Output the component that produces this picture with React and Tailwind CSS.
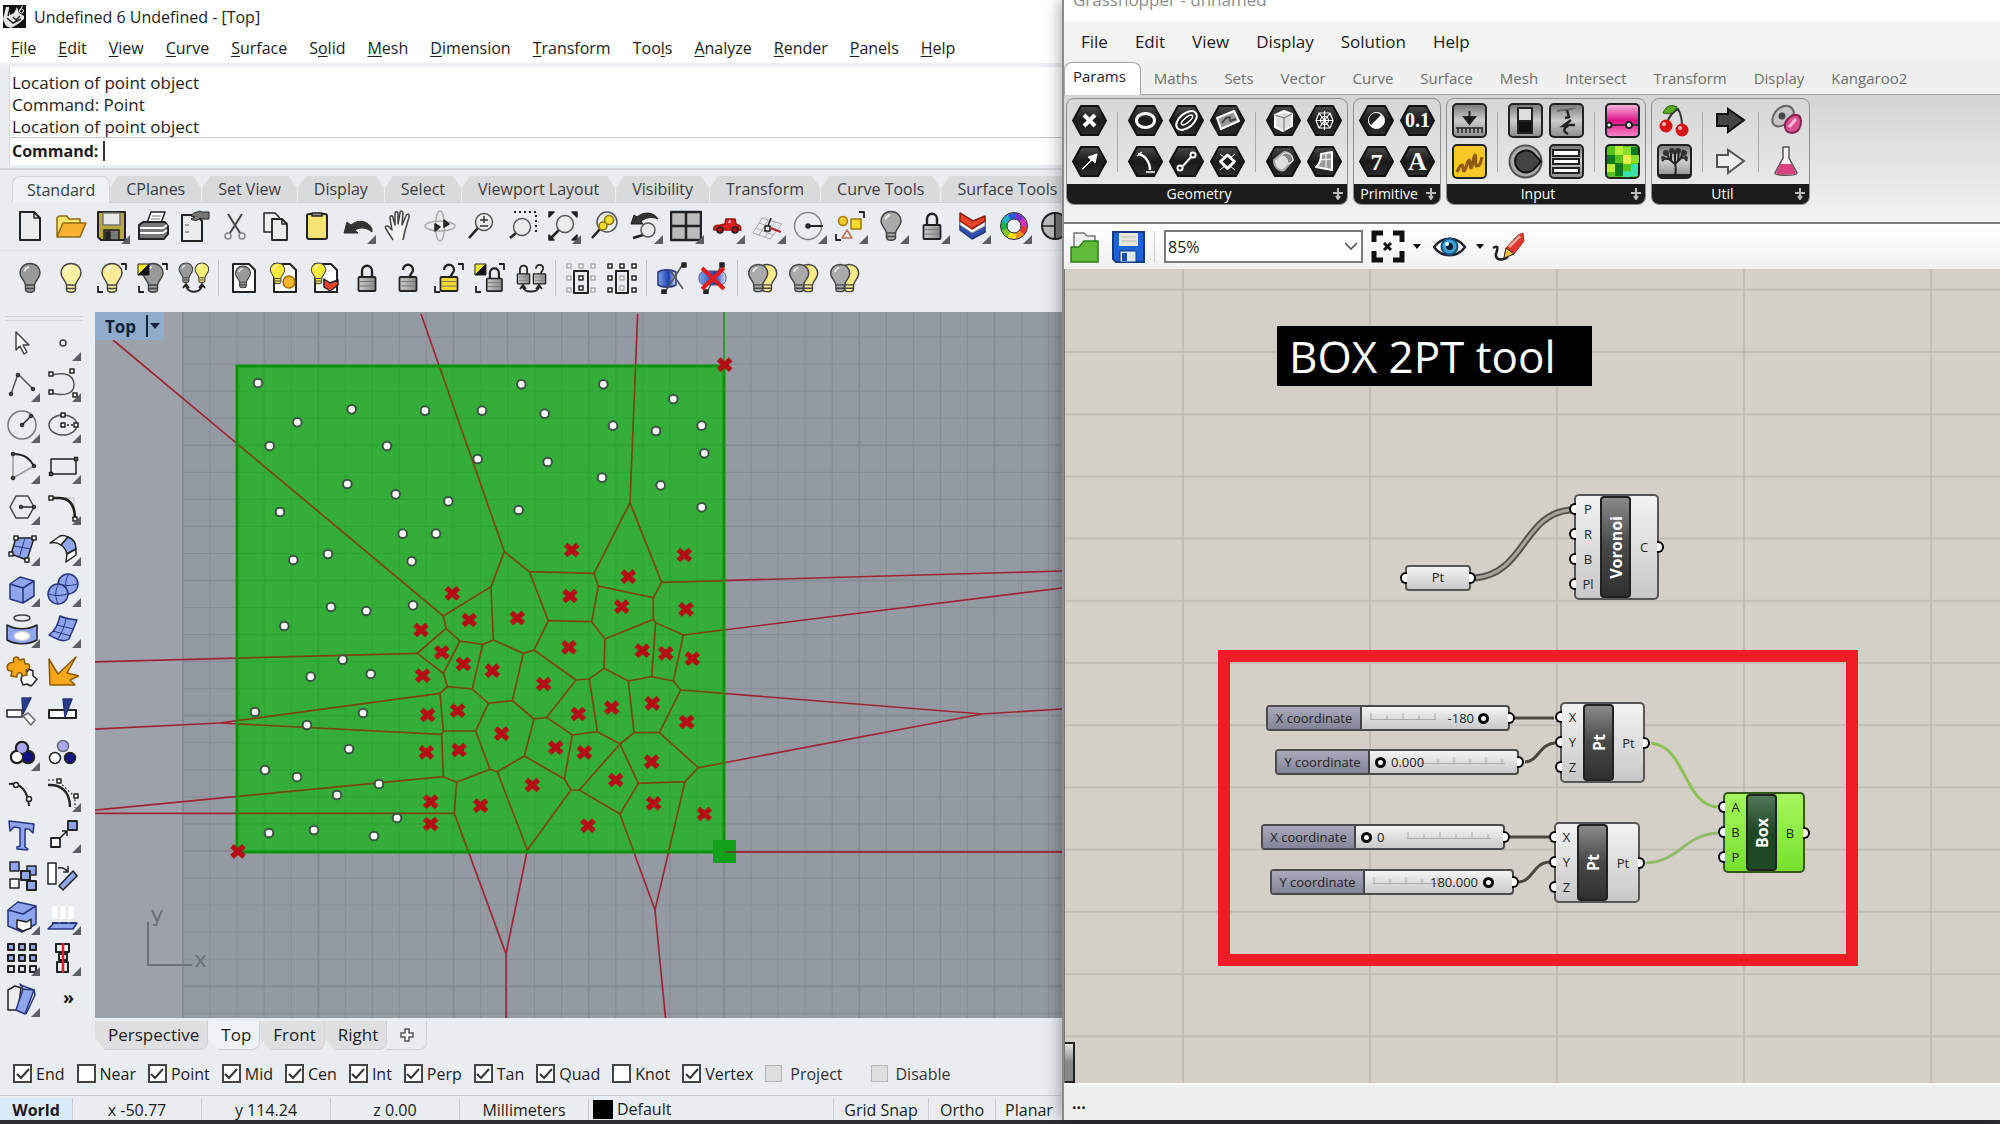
import React from "react";

const INK = "#222";
const BLUE = "#8fa6ee";
const NAVY = "#27357f";
const PALE = "#f4f5f7";

function Svg({ children, size = 32 }) {
  return (
    <svg width={size} height={size} viewBox="0 0 32 32" fill="none" stroke={INK} strokeWidth="1.5" strokeLinejoin="round" aria-hidden="true">
      {children}
    </svg>
  );
}

/* ---------- shared icon parts ---------- */
const Sq = ({ x, y, s = 4, f = "#fff" }) => <rect x={x - s / 2} y={y - s / 2} width={s} height={s} fill={f} strokeWidth="1.5" />;
const Dot = ({ x, y, r = 1.8 }) => <circle cx={x} cy={y} r={r} fill="#444" strokeWidth="1" />;

const BulbShape = ({ fill }) => (
  <g>
    <path d="M16 1.5c-6 0-10 4.300-10 9.500 0 5 4.500 7 5.500 12v4.500c0 3.500 9 3.500 9 0V23c1-5 5.500-7 5.500-12 0-5.200-4-9.500-10-9.500z" fill={fill} stroke="#444" />
    <path d="M12 23h8M12 26.500h8" stroke="#444" />
    <path d="M10.500 9.500c.5-2.500 2-4 4.500-4.500" stroke="#fff" strokeWidth="1.800" opacity=".8" />
  </g>
);
const LockShape = ({ fill = "url(#metal)", open = false }) => (
  <g>
    <path d={open ? "M11 8c0-7 10-7 10 0 0 3-3 3-3 7" : "M11 16V9c0-7 10-7 10 0v7"} strokeWidth="2.400" />
    <rect x="7.500" y="15" width="17" height="14" rx="1" fill={fill} strokeWidth="1.800" />
    <path d="M9 19.500h14M9 24h14" stroke="#777" strokeWidth="1" />
  </g>
);
const Corners = () => <path d="M25 2h5v6M2 24v6h5" strokeWidth="1.800" />;
const YellowTag = () => (
  <g strokeWidth="1">
    <path d="M1 2h11L1 13z" fill="#f5ec2c" />
    <path d="M12 2v11H1z" fill="#111" />
  </g>
);
const Lens = ({ cx = 19, cy = 12, r = 8.500 }) => (
  <g>
    <path d={`M${cx - r * 0.7} ${cy + r * 0.7}L4 28`} strokeWidth="2.600" />
    <circle cx={cx} cy={cy} r={r} fill="#e9ebee" stroke="#555" />
  </g>
);
const Page = () => <path d="M5 2h16l6 6v22H5z" fill="#fff" strokeWidth="2" />;

/* ---------- main toolbar icons ---------- */
const row1 = [
  ["New", false, <><path d="M6 2h14l6 6v22H6z" fill="#ececee" strokeWidth="2" /><path d="M20 2v6h6" /></>],
  ["Open", false, <><path d="M2 26V8l2-2h8l2 3h11v4" fill="#ffe56b" stroke="#8a6a10" /><path d="M2 27l6-14h23l-6 14z" fill="#f9b233" stroke="#8a6a10" /></>],
  ["Save", true, <><path d="M2 2h27v28H5l-3-3z" fill="#b8a73a" strokeWidth="2" /><rect x="7" y="3" width="17" height="12" fill="#e7e7e7" stroke="#777" /><rect x="8" y="20" width="15" height="10" fill="#777" /><rect x="10" y="22" width="4" height="7" fill="#222" /></>],
  ["Print", false, <><path d="M10 13l4-11h14l-4 11z" fill="#fff" /><path d="M15 6h9M14 9h9" stroke="#777" strokeWidth="1" /><path d="M2 15l4-3h22l3 4v8l-4 5H2z" fill="#777" strokeWidth="2" /><path d="M3 18h23l4-3M3 23h23l4-3" stroke="#fff" strokeWidth="1.800" /></>],
  ["Document properties", false, <><path d="M4 5h14l6 6v20H4z" fill="#ececee" strokeWidth="2" /><path d="M13 6c2-3 4-4 7-4l2-1 2 1h7v7h-7l-2-1c-2 3-6 3-9 1l4-2z" fill="#777" strokeWidth="1" /><path d="M7 15h4M7 22h4" stroke="#888" /></>],
  ["Cut", false, <><path d="M9 4l12 19M23 4L11 23" stroke="#444" strokeWidth="2" /><circle cx="9" cy="26" r="3" stroke="#888" /><circle cx="23" cy="26" r="3" stroke="#888" /></>],
  ["Copy", false, <><path d="M4 3h11l4 4v15H4z" fill="#eee" /><path d="M12 9h10l5 5v16H12z" fill="#ececee" strokeWidth="1.800" /><path d="M22 9v5h5" /></>],
  ["Paste", false, <><rect x="6" y="4" width="20" height="25" rx="2" fill="#f7e275" strokeWidth="2" /><path d="M11 6V3h10v3z" fill="#999" /></>],
  ["Undo", true, <path d="M2 23l3-11 4 3c7-6 17-5 21 4v3c-6-5-12-5-17-2l3 3z" fill="#333" stroke="#333" strokeWidth="1" />],
  ["Pan", false, <path d="M10 30L3 19c-2-3 1-4 3-2l3 3L7 8c0-3 3-3 3 0l2 7V4c0-3 3-3 3 0v10l2-11c0-3 3-2 3 0l-1 12 4-9c1-3 4-2 3 1l-4 14-2 9" fill="#f3f3f3" stroke="#444" />],
  ["Rotate view", false, <><ellipse cx="16" cy="16" rx="15" ry="5" stroke="#aaa" /><ellipse cx="16" cy="16" rx="4.500" ry="15" stroke="#aaa" /><path d="M11 14l5 3-5 4zM20 10l5 4-5 3z" fill="#333" /></>],
  ["Zoom dynamic", false, <><Lens /><path d="M15 10h8M19 6v7M15 16h8" stroke="#333" /></>],
  ["Zoom window", false, <><Lens cx={16} cy={17} /><path d="M8 2h22v21" strokeDasharray="2 3" strokeWidth="2" /></>],
  ["Zoom extents", true, <><Lens cx={18} cy={14} /><path d="M2 7V2h5zM30 7V2h-5zM30 25v5h-5zM2 25v5h5z" fill="#222" /></>],
  ["Zoom selected", false, <><Lens cx={19} cy={12} r={10} /><circle cx="21" cy="10" r="4.500" fill="#f4dc2f" stroke="#887500" /><circle cx="15" cy="16" r="4" fill="#f4dc2f" stroke="#887500" /></>],
  ["Undo view change", true, <><Lens cx={19} cy={20} r={7} /><path d="M2 14l3-9 3 2c7-6 17-5 21 2-7-3-12-1-17 2l2 3z" fill="#333" strokeWidth="1" /></>],
  ["Four viewports", true, <><rect x="1" y="2" width="30" height="28" fill="#bbb" strokeWidth="2.500" /><path d="M16 2v28M1 16h30" strokeWidth="2.500" /></>],
  ["Set view", true, <><path d="M3 20c-1-4 2-5 6-5l5-1 1-5h9l1 5 4 2 1 4z" fill="#e01e1e" stroke="#a31212" /><circle cx="9" cy="20" r="3" fill="#a31212" /><circle cx="24" cy="20" r="3" fill="#a31212" /><path d="M17 13l1-3h2v3z" fill="#f9c" stroke="none" /></>],
  ["Construction plane", true, <><path d="M10 8L1 23l17 6 12-15zM7 13l17 6M4 18l17 7M16 10L7 25M23 12L13 27" stroke="#aaa" strokeWidth="1" /><rect x="13" y="16" width="5" height="5" /><path d="M18 18l11 4" stroke="#b23" strokeWidth="2" /><path d="M16 16l3-8" /></>],
  ["Object snap", true, <><circle cx="15" cy="16" r="13.500" stroke="#888" /><path d="M15 16h15" strokeWidth="2" /><circle cx="15" cy="16" r="2" fill="#333" /></>],
  ["Select objects", true, <><Corners /><circle cx="9" cy="11" r="4.500" fill="#f7c92d" stroke="#a37800" /><rect x="17" y="9" width="10" height="10" fill="#ffd92e" stroke="#a37800" /><path d="M13 20l5 8H8z" stroke="#b67050" /></>],
  ["Hide objects", true, <BulbShape fill="#aaa" />],
  ["Lock objects", true, <LockShape />],
  ["Layers", true, <><path d="M3 12v8l12 9 13-7V10L15 18z" fill="#3050b0" stroke={NAVY} /><path d="M3 9v6l12 8 13-7V9L15 17z" fill="#fff" stroke="#889" strokeWidth="1" /><path d="M3 3v8l12 8 13-8V6l-12 5z" fill="#e8452a" stroke="#8c2010" /></>],
  ["Object properties", true, "wheel"],
  ["Shade", true, <><circle cx="16" cy="16" r="13" fill="#bbb" strokeWidth="2" /><path d="M16 3v26M3 16h26" /><path d="M16 3a13 13 0 0 1 0 26z" fill="#777" /></>],
];

function ColorWheel() {
  const hues = ["#e33", "#f7941d", "#ffe11a", "#7bc623", "#19b34a", "#17b5c9", "#2460d8", "#7a2fd0", "#d62fb3"];
  return (
    <Svg>
      {hues.map((c, i) => (
        <circle key={c} cx="16" cy="16" r="10" stroke={c} strokeWidth="6" pathLength="9" strokeDasharray="1.050 7.950" strokeDashoffset={-i} />
      ))}
      <circle cx="16" cy="16" r="13.500" strokeWidth="1" />
      <circle cx="16" cy="16" r="7" strokeWidth="1" fill="#eef1f6" />
    </Svg>
  );
}

const Half = ({ x, y, k = 0.6, children }) => <g transform={`translate(${x} ${y}) scale(${k})`}>{children}</g>;
const row2 = [
  ["Hide", <BulbShape fill="#999" />],
  ["Show", <BulbShape fill="#fdf0a0" />],
  ["Show selected", <><Corners /><BulbShape fill="#fdeb9a" /></>],
  ["Isolate", <><Corners /><BulbShape fill="#999" /><YellowTag /></>],
  ["Swap hidden", <><Half x={-3} y={0} k={0.68}><BulbShape fill="#999" /></Half><Half x={13} y={0} k={0.68}><BulbShape fill="#fdeb7a" /></Half><path d="M8 23c0 9 16 9 16 0M5 26l3-4 3 4M21 26l3-4 3 4" strokeWidth="1.800" /></>],
  null,
  ["Hide in detail", <><Page /><Half x={3} y={3} k={0.75}><BulbShape fill="#999" /></Half></>],
  ["Show in detail", <><Page /><circle cx="20" cy="20" r="6" fill="#f7b52c" stroke="#a06a00" /><Half x={-3} y={0} k={0.72}><BulbShape fill="#fbea3c" /></Half></>],
  ["Show layer", <><Page /><path d="M14 17l6 4 8-3v5l-8 6-6-4z" fill="#e8452a" /><Half x={-3} y={0} k={0.72}><BulbShape fill="#fbea3c" /></Half></>],
  ["Lock", <LockShape />],
  ["Unlock", <LockShape open />],
  ["Unlock selected", <><Corners /><LockShape open fill="#fbd82c" /></>],
  ["Isolate lock", <><Corners /><Half x={6} y={3} k={0.9}><LockShape /></Half><YellowTag /></>],
  ["Swap locked", <><Half x={-3} y={1} k={0.72}><LockShape /></Half><Half x={13} y={1} k={0.72}><LockShape open /></Half><path d="M8 25c0 6 16 6 16 0M5 27l3-4 3 4M21 27l3-4 3 4" strokeWidth="1.800" /></>],
  null,
  ["Points on", <><g stroke="#aaa"><Sq x={4} y={4} /><Sq x={16} y={4} /><Sq x={28} y={4} /><Sq x={4} y={16} /><Sq x={28} y={16} /><Sq x={4} y={28} /><Sq x={28} y={28} /></g><rect x="9" y="9" width="14" height="22" strokeWidth="2" /><Sq x={16} y={16} /><Sq x={16} y={26} /></>],
  ["Points off", <><Sq x={4} y={4} /><Sq x={16} y={4} /><Sq x={28} y={4} /><Sq x={4} y={16} /><Sq x={28} y={16} /><Sq x={4} y={28} /><Sq x={28} y={28} /><rect x="10" y="9" width="12" height="22" strokeWidth="2" /><g stroke="#aaa"><Sq x={16} y={16} /><Sq x={16} y={26} /></g></>],
  null,
  ["Clipping plane", <><path d="M2 10c5-3 13-3 18 0v13c-5 3-13 3-18 0z" fill="url(#bluebar)" stroke={NAVY} /><path d="M14 8l13 19M9 30l18-28" stroke="#555" /><Sq x={28} y={3} f="#222" /><Sq x={8} y={30} f="#222" /></>],
  ["Disable clipping plane", <><rect x="2" y="9" width="27" height="14" rx="6" fill="url(#bluebar)" stroke="#557" strokeWidth="1" /><path d="M10 30L25 2" stroke="#555" /><Sq x={25} y={3} f="#222" /><Sq x={9} y={30} f="#222" /><path d="M5 6l22 21M27 6L5 27" stroke="#e31b1b" strokeWidth="4" /></>],
  null,
  ...["Hide swap", "Hide group", "Show group"].map((n) => [n, <><Half x={5} y={1} k={0.95}><BulbShape fill="#fdeb8a" /></Half><Half x={-4} y={1} k={0.95}><BulbShape fill="#aaa" /></Half></>]),
];

/* ---------- side tool palette ---------- */
const tools = [
  ["Select", false, <path d="M10 5v18l4-4 4 8 3-2-4-7h6z" fill="#fff" stroke="#444" />],
  ["Point", true, <circle cx="16" cy="16" r="3" stroke="#444" fill="#eee" />],
  ["Polyline", true, <><path d="M5 26L12 6l15 15" stroke="#555" /><Dot x={5} y={26} /><Dot x={12} y={7} /><Dot x={27} y={21} /></>],
  ["Control point curve", true, <><path d="M5 7c12-3 22-1 22 10 0 10-12 11-22 8" stroke="#555" /><Sq x={4} y={6} /><Sq x={25} y={3} /><Sq x={4} y={24} /><Sq x={28} y={27} /></>],
  ["Circle", true, <><circle cx="16" cy="16" r="14" stroke="#777" /><path d="M16 16l9-9" /><Dot x={16} y={16} /><Dot x={25} y={7} /></>],
  ["Ellipse", true, <><ellipse cx="16" cy="16" rx="14" ry="10" stroke="#555" /><path d="M16 16h12" strokeDasharray="2 2" /><Sq x={16} y={6} /><Sq x={16} y={16} /><Sq x={29} y={16} /></>],
  ["Arc", true, <><path d="M28 16L7 28V4" stroke="#999" /><path d="M7 4c12 0 17 5 21 12" strokeWidth="2" /><Dot x={7} y={4} /><Dot x={28} y={16} /><Dot x={7} y={28} /></>],
  ["Rectangle", true, <><rect x="4" y="9" width="25" height="15" /><Sq x={4} y={24} s={3} f="#888" /><Sq x={29} y={9} s={3} f="#888" /></>],
  ["Polygon", true, <><path d="M4 16l6-11h12l6 11-6 11H10z" stroke="#444" /><path d="M15 16h13" /><Dot x={15} y={16} /><Dot x={28} y={16} /></>],
  ["Fillet", true, <><path d="M5 7h22v21" stroke="#bbb" strokeWidth="1" /><path d="M5 7h7c10 0 16 6 16 21" strokeWidth="2.500" /><Sq x={4} y={7} /><Sq x={28} y={28} /></>],
  ["Surface from points", true, <><path d="M10 6h18l-7 22-16-6z" fill={BLUE} /><path d="M19 6l-6 20M8 14l17 3" stroke={NAVY} strokeWidth="1" /><Sq x={10} y={6} /><Sq x={28} y={6} /><Sq x={5} y={22} /><Sq x={21} y={28} /></>],
  ["Fillet surface", true, <><path d="M3 11l10-7c3-1 6 0 8 1l-7 8c-3-2-7-3-11-2z" fill="#fff" /><path d="M14 13l7-8c6 2 8 7 8 12l-9 5c-1-4-3-7-6-9z" fill={BLUE} /><path d="M20 22l9-5v6l-10 7z" fill="#fff" /></>],
  ["Box", true, <><path d="M4 11l10-7 14 4v15l-11 7-13-4z" fill={BLUE} stroke={NAVY} /><path d="M4 11l13 4 11-7M17 15v15" stroke={NAVY} /></>],
  ["Sphere", true, <><circle cx="21" cy="11" r="10" fill={BLUE} stroke={NAVY} /><path d="M21 2c-3 6-3 12 0 19M12 11c6 2 12 2 18 0" stroke={NAVY} strokeWidth="1" /><circle cx="11" cy="21" r="10" fill={BLUE} stroke={NAVY} /><path d="M11 12c-3 6-3 12 0 19M2 21c6 2 12 2 18 0" stroke={NAVY} strokeWidth="1" /></>],
  ["Boolean", true, <><ellipse cx="16" cy="4" rx="8" ry="3" stroke="#444" /><path d="M1 11c9 5 21 5 30 0v15c-9 5-21 5-30 0z" fill={BLUE} /><ellipse cx="16" cy="22" rx="8" ry="4.500" fill="#fff" stroke="#ccd" /></>],
  ["Mesh", true, <><path d="M13 2c6 3 10 3 17 4l-8 19c-6 4-12 0-20-4 6-4 9-10 11-19z" fill={BLUE} stroke={NAVY} /><path d="M19 5c-2 9-5 15-8 20M10 11l17 4M6 17l18 5" stroke={NAVY} strokeWidth="1" /></>],
  ["Extract", false, <><path d="M16 19l5-2 2-3 4 2v5l4 3-3 4-3 3-4-2-4 1-2-5z" fill="#fff" /><path d="M4 8l4-1c-3-5 5-7 5-2l5-1 1 5c5-2 7 5 1 6l1 5-5 1c1-5-6-4-5 1l-6-1 1-5c-6 1-6-6-2-8z" fill="#f8a71b" stroke="#8a5a00" /></>],
  ["Explode", false, <path d="M3 30L2 4l9 15L29 2l-9 16 12 3-9 4 5 5z" fill="#f8a71b" stroke="#8a5a00" />],
  ["Trim", false, <><rect x="1" y="14" width="15" height="7" fill="#fff" /><path d="M17 20l5-3 7 7-4 5z" fill="#fff" stroke="#666" /><path d="M16 2h9l-8 16z" fill="#2b3d8c" stroke={NAVY} /></>],
  ["Split", false, <><rect x="2" y="14" width="27" height="8" fill="#fff" strokeWidth="2" /><path d="M16 3h9l-7 18z" fill="#2b3d8c" stroke={NAVY} /></>],
  ["Group", true, <><g strokeWidth="3.500"><circle cx="16" cy="11" r="5.500" /><circle cx="11" cy="20" r="5.500" /><circle cx="22" cy="20" r="5.500" /></g><circle cx="22" cy="20" r="5" fill="#14147e" stroke="none" /><circle cx="11" cy="20" r="5" fill="#fff" stroke="none" /><circle cx="16" cy="11" r="5" fill="#aaaaf2" stroke="none" /></>],
  ["Ungroup", false, <><circle cx="16" cy="9" r="5.500" fill="#aaaaf2" stroke="#667" /><circle cx="8" cy="21" r="5.500" fill="#fff" /><circle cx="23" cy="21" r="5.500" fill="#14147e" /></>],
  ["Edit points", false, <><path d="M3 6c10-2 19 6 20 22" strokeWidth="2" /><circle cx="10" cy="7" r="2.500" fill="#fff" /><circle cx="23" cy="21" r="2.500" fill="#fff" /></>],
  ["Control points", true, <><path d="M1 7c12-1 22 6 22 22" strokeWidth="2.500" /><path d="M1 2h9l18 17v11" strokeDasharray="2 2" stroke="#555" /><Sq x={12} y={3} /><Sq x={29} y={18} /></>],
  ["Text", false, <path d="M3 2l25 3-1 9-4-4-4 0v18l3 2-1 1-10-1 0-2 3-1V9L8 8l-4 4z" fill={BLUE} stroke={NAVY} />],
  ["Move", true, <><rect x="4" y="19" width="9" height="9" fill="#fff" strokeWidth="1.800" /><rect x="21" y="2" width="9" height="9" fill={BLUE} strokeWidth="1.800" /><path d="M13 19l7-7m-5 0h5v5" /></>],
  ["Copy objects", false, <><rect x="4" y="2" width="9" height="9" fill={BLUE} /><rect x="4" y="19" width="9" height="9" fill={PALE} /><rect x="21" y="6" width="9" height="9" fill={BLUE} /><rect x="15" y="11" width="9" height="9" fill={BLUE} strokeWidth="2" /><rect x="21" y="21" width="9" height="9" fill={BLUE} strokeWidth="2" /></>],
  ["Rotate", false, <><rect x="1" y="3" width="8" height="21" fill="#fff" /><path d="M11 8c4-1 7 0 10 4m-5 0h5V6" /><path d="M12 26L26 11l4 5-14 14z" fill={BLUE} /></>],
  ["Solid edit", true, <><path d="M2 9L12 1l18 4v18l-14 8-14-6z" fill={BLUE} stroke={NAVY} /><path d="M2 9l15 4 13-8" stroke={NAVY} /><path d="M11 19l10 2 4-3v9l-8 3-6-3z" fill="#fff" /></>],
  ["Extrude", true, <><path d="M8 5v13M16 5v13M24 5v13" stroke="#fff" strokeWidth="5" /><path d="M1 28l6-6h23l-4 6z" fill={BLUE} stroke={NAVY} /><path d="M5 22h25" stroke={NAVY} strokeDasharray="6 3" strokeWidth="2" /></>],
  ["Array", true, <>{[4, 15, 26].map((x) => [4, 15, 26].map((y) => <rect key={`${x}-${y}`} x={x - 2} y={y - 2} width="6" height="6" fill={y === 26 ? "#dfe4f5" : BLUE} strokeWidth="2" />))}</>],
  ["Align", true, <><rect x="9" y="2" width="13" height="8" strokeWidth="2" /><rect x="12" y="12" width="8" height="6" strokeWidth="2" /><rect x="10" y="20" width="11" height="10" strokeWidth="2" /><path d="M16 1v30" stroke="#e02020" strokeWidth="2.500" /></>],
  ["Orient", true, <><path d="M2 7l7-4 6 2-3 22-10 0z" fill="#eee" /><path d="M17 6l11 1-9 24-9-4z" fill={BLUE} stroke={NAVY} /><path d="M17 6l-3-5 3 2 11 4 1 5-9 19" stroke={NAVY} /></>],
  ["More tools", false, "more"],
];

function Flyout() {
  return (
    <svg className="absolute bottom-0.5 right-0.5" width="9" height="9" aria-hidden="true">
      <path d="M9 0v9H0z" fill="#5c5f66" />
    </svg>
  );
}

function ToolButton({ label, flyout, children }) {
  return (
    <button type="button" aria-label={label} className="relative grid h-[41px] w-[41px] shrink-0 place-items-center">
      {children}
      {flyout && <Flyout />}
    </button>
  );
}

/* ---------- modelling viewport ---------- */
const edges = [
  "-831,-570 160,258 168,295 82,370 160,430 172,470 150,490 160,603 155,613 160,740 200,757 193,850 348,1272 348,1500",
  "160,258 303,170 343,65 93,-648",
  "343,65 418,125 612,130 625,168 790,203 790,268 645,327 642,415 715,453 732,608 690,642",
  "303,170 310,330 278,343 210,333 168,295",
  "418,125 475,272 432,360 400,370 310,330",
  "475,272 605,275 625,168",
  "605,275 645,327",
  "612,130 720,-82 815,157 790,203",
  "720,-82 743,-648",
  "815,157 2016,123",
  "790,268 797,278 880,315 2016,174",
  "797,278 785,440 715,453",
  "785,440 850,453 872,480 808,608 732,608",
  "880,315 850,453",
  "872,480 1776,552 2016,537",
  "1776,552 925,713 885,755 745,760 690,642",
  "808,608 925,713",
  "885,755 795,1140 830,1500",
  "745,760 690,852 795,1140",
  "690,852 568,780 543,780 412,960",
  "568,780 690,642 622,605 547,615 470,562 558,450 598,447 642,415",
  "598,447 622,605",
  "558,450 432,360",
  "547,615 523,747 543,780",
  "523,747 403,678 432,567 470,562",
  "432,567 367,512 400,370",
  "367,512 295,520 247,477 278,343",
  "247,477 172,470",
  "210,333 160,430",
  "295,520 257,603 160,603",
  "257,603 300,718 322,725 412,960 348,1272",
  "403,678 322,725",
  "300,718 200,757",
  "82,370 -900,396",
  "150,490 -511,579 155,613",
  "-511,579 -900,598",
  "160,740 -900,842",
  "193,850 -900,850",
];
const seeds = [
  [545, 60], [715, 140], [883, 75], [187, 190], [540, 198], [695, 230], [888, 238], [238, 270], [382, 264], [93, 300],
  [537, 352], [757, 362], [827, 370], [907, 386], [155, 367], [220, 402], [307, 422], [98, 437], [461, 462], [565, 552],
  [665, 533], [787, 520], [890, 576], [113, 555], [203, 542], [335, 611], [497, 653], [583, 667], [785, 695], [109, 667],
  [207, 660], [427, 765], [677, 750], [791, 820], [943, 852], [122, 815], [272, 827], [122, 882], [594, 887],
  [1004, -496], [-456, 964],
];
const dots = [
  [84, 99], [365, 178], [585, 182], [756, 182], [874, 103], [944, 191], [1120, 103], [1330, 147], [1149, 227], [1278, 243],
  [1415, 227], [1423, 310], [202, 217], [119, 288], [471, 288], [743, 327], [953, 336], [1116, 383], [1292, 406], [1415, 472],
  [352, 402], [497, 433], [655, 454], [866, 480], [150, 486], [518, 551], [618, 551], [190, 630], [294, 612], [545, 634],
  [303, 771], [409, 783], [549, 766], [163, 828], [338, 929], [422, 972], [242, 980], [75, 1086], [231, 1125], [399, 1089],
  [357, 1197], [105, 1260], [201, 1281], [447, 1302], [321, 1335], [501, 1404], [117, 1449], [252, 1440], [432, 1458],
];
const GRID = 27.05;

function Voronoi({ stroke }) {
  return (
    <g transform="translate(295 218) scale(.33333)" fill="none" stroke={stroke} strokeWidth="5">
      {edges.map((e) => <polyline key={e} points={e} />)}
    </g>
  );
}

function Viewport() {
  const cols = Array.from({ length: 60 }, (_, i) => i);
  const gridLines = (
    <>
      {cols.map((i) => (
        <path key={`v${i}`} d={`M${88 + i * GRID} 0V1200`} strokeWidth={i % 5 ? 1 : 2} />
      ))}
      {cols.map((i) => (
        <path key={`h${i}`} d={`M88 ${-2 + i * GRID}H2000`} strokeWidth={i % 5 ? 1 : 2} />
      ))}
    </>
  );
  return (
    <div className="relative min-h-0 flex-1 overflow-hidden bg-[#9da2aa]">
      <svg className="block h-full w-full" aria-label="Top viewport">
        <defs>
          <clipPath id="boxclip"><rect x="142" y="54" width="487" height="486" /></clipPath>
        </defs>
        <rect x="88" y="0" width="2000" height="1200" fill="#949aa2" />
        <g stroke="#868b93">{gridLines}</g>
        <path d="M53 610v43h44" fill="none" stroke="#6c7178" strokeWidth="2" />
        <g fill="none" stroke="#6c7178" strokeWidth="2">
          <path d="M57 598l5 11m5-11l-6 15h-3" />
          <path d="M101 643l9 12m0-12l-9 12" />
        </g>
        <path d="M629 540H2000" stroke="#a0303c" strokeWidth="2" />
        <path d="M629 0V54" stroke="#2f9a3a" strokeWidth="2" />
        <Voronoi stroke="#a02434" />
        <rect x="142" y="54" width="487" height="486" fill="#35ad39" />
        <g clipPath="url(#boxclip)">
          <g stroke="#2fa534">{gridLines}</g>
          <Voronoi stroke="#7d4410" />
        </g>
        <rect x="142" y="54" width="487" height="486" fill="none" stroke="#0f930f" strokeWidth="3" />
        <rect x="618" y="528" width="23" height="23" fill="#12a01a" />
        <path d="M630 540h12" stroke="#5b4a20" strokeWidth="2" />
        <g transform="translate(295 218) scale(.33333)">
          {seeds.map(([x, y]) => (
            <g key={`${x},${y}`} stroke="#b40d16" strokeWidth="16">
              <path d={`M${x - 18} ${y - 16}L${x + 18} ${y + 16}M${x + 18} ${y - 16}L${x - 18} ${y + 16}`} />
            </g>
          ))}
        </g>
        <g transform="translate(135 38) scale(.33333)" fill="#fff" stroke="#3c5044" strokeWidth="6">
          {dots.map(([x, y]) => <circle key={`${x},${y}`} cx={x} cy={y} r="13" />)}
        </g>
      </svg>
      <button type="button" className="absolute left-0 top-0 flex h-7 w-[69px] items-center gap-2.5 bg-[#8fabc9] pl-2.5 text-[17px] font-bold leading-none text-[#10233c]">
        Top
        <span className="flex items-center gap-0.5 border-l-2 border-[#10233c] py-2 pl-0.5">
          <svg width="10" height="6" aria-hidden="true"><path d="M0 0h10L5 6z" fill="#10233c" /></svg>
        </span>
      </button>
    </div>
  );
}

/* ---------- modelling window ---------- */
const menu = [["", "F", "ile"], ["", "E", "dit"], ["", "V", "iew"], ["", "C", "urve"], ["", "S", "urface"], ["S", "o", "lid"], ["", "M", "esh"], ["", "D", "imension"], ["", "T", "ransform"], ["Too", "l", "s"], ["", "A", "nalyze"], ["", "R", "ender"], ["", "P", "anels"], ["", "H", "elp"]];
const tabs = ["CPlanes", "Set View", "Display", "Select", "Viewport Layout", "Visibility", "Transform", "Curve Tools", "Surface Tools"];
const snaps = [["End", 1], ["Near", 0], ["Point", 1], ["Mid", 1], ["Cen", 1], ["Int", 1], ["Perp", 1], ["Tan", 1], ["Quad", 1], ["Knot", 0], ["Vertex", 1]];

function Snap({ name, on }) {
  return (
    <label className="flex items-center gap-1">
      <span className="relative grid place-items-center">
        <input type="checkbox" defaultChecked={!!on} className="peer h-[19px] w-[19px] appearance-none border-2 border-[#444] bg-white" />
        <svg className="pointer-events-none absolute hidden peer-checked:block" width="14" height="12" viewBox="0 0 14 12" fill="none" stroke="#333" strokeWidth="2" aria-hidden="true">
          <path d="M1 6l4 4 8-9" />
        </svg>
      </span>
      {name}
    </label>
  );
}

function ModelWindow() {
  return (
    <section className="flex w-[53.1%] flex-col overflow-hidden bg-[#e9ecf1]">
      <header className="flex h-[33px] shrink-0 items-center gap-2 bg-white pl-[3px]">
        <svg width="23" height="23" viewBox="0 0 23 23" aria-hidden="true">
          <rect width="23" height="23" fill="#111" />
          <path d="M0 14l3-12 3 0 1 8 4-2 3-6 2 6 5 3v3l-6 5-7 4-5-2-2-4z" fill="#e8e8e8" />
          <path d="M4 13l6 5 8-4M7 3l-2 8M10 12l3 3 4-4" stroke="#222" fill="none" strokeWidth="1.500" />
          <circle cx="18.500" cy="6" r="2" fill="#111" stroke="#fff" />
          <path d="M16.500 6l3-5" stroke="#fff" />
        </svg>
        <h1 className="text-base">Undefined 6 Undefined - [Top]</h1>
      </header>
      <nav className="flex h-[30px] shrink-0 items-center gap-[22px] bg-white pl-[11px]">
        {menu.map(([a, u, b]) => (
          <button type="button" key={a + u + b}>{a}<span className="underline underline-offset-2">{u}</span>{b}</button>
        ))}
      </nav>
      <div className="shrink-0 border-t-4 border-[#eceef1] pl-[9px]">
        <div className="border-l border-[#d5d8de] bg-white">
          <div className="h-[71px] border-b border-[#c5c6ca] pl-0.5 pt-[5px] text-[17px] leading-[22px]">
            <p>Location of point object</p>
            <p>Command: Point</p>
            <p>Location of point object</p>
          </div>
          <label className="flex h-[27px] items-center gap-[5px] pb-0.5 pl-0.5 font-bold">
            Command:
            <span className="h-5 w-[2px] bg-[#333]" />
            <input aria-label="Command" className="min-w-0 flex-1 font-normal outline-none" />
          </label>
        </div>
      </div>
      <div className="mt-[3px] flex h-[35px] shrink-0 items-end border-t-2 border-[#d3d7dd] pl-[12px] text-[#3c3c40]">
        <button type="button" className="h-[27px] shrink-0 rounded-t-lg border border-b-0 border-[#d5d7da] bg-[#eef1f6] px-3.5">Standard</button>
        <div className="flex flex-1 gap-px overflow-hidden border-b border-[#cfd1d5]">
          {tabs.map((t) => (
            <button type="button" key={t} className="h-[26px] shrink-0 bg-[#d9dadc] px-4 [clip-path:polygon(8px_0,calc(100%-8px)_0,100%_12px,100%_100%,0_100%,0_12px)]">{t}</button>
          ))}
        </div>
      </div>
      <div className="flex h-[48px] shrink-0 items-start overflow-hidden border-b border-[#dfe2e7] pl-[9px] pt-0.5">
        {row1.map(([label, fly, art]) => (
          <ToolButton key={label} label={label} flyout={fly}>{art === "wheel" ? <ColorWheel /> : <Svg>{art}</Svg>}</ToolButton>
        ))}
      </div>
      <div className="flex h-[53px] shrink-0 items-center overflow-hidden pl-[9px]">
        {row2.map((it, i) =>
          it ? (
            <ToolButton key={it[0]} label={it[0]}><Svg>{it[1]}</Svg></ToolButton>
          ) : (
            <span key={i} className="mx-1 h-9 w-px bg-[#c0c3c9]" />
          )
        )}
      </div>
      <div className="mt-2 flex min-h-0 flex-1">
        <aside className="w-[95px] shrink-0 pl-px">
          <div className="mx-1 mb-px mt-1 h-[5px] w-[78px] border-y border-[#d0d3d9]" />
          <div className="grid grid-cols-[41px_41px]">
            {tools.map(([label, fly, art]) => (
              <ToolButton key={label} label={label} flyout={fly}>
                {art === "more" ? <span className="pb-1 pl-3 text-lg font-bold leading-none">»</span> : <Svg>{art}</Svg>}
              </ToolButton>
            ))}
          </div>
        </aside>
        <div className="flex min-w-0 flex-1 flex-col">
          <Viewport />
          <div className="flex h-[32px] shrink-0 items-start pt-[3px] text-[17px]">
            {["Perspective", "Top", "Front", "Right"].map((t) => (
              <button type="button" key={t} className={`h-[29px] rounded-br-lg border-b border-r border-[#cfd0d4] pl-[13px] pr-2 [clip-path:polygon(0_0,100%_0,100%_100%,10px_100%,0_60%)] ${t === "Top" ? "bg-[#eff2f7]" : "bg-[#dfdfe1]"}`}>{t}</button>
            ))}
            <button type="button" aria-label="New viewport" className="grid h-[29px] w-10 place-items-center rounded-br-lg border-b border-r border-[#cfd0d4]">
              <svg width="14" height="14" fill="#fff" stroke="#555" strokeWidth="1.500" aria-hidden="true"><path d="M5 1h4v4h4v4H9v4H5V9H1V5h4z" /></svg>
            </button>
          </div>
        </div>
      </div>
      <div className="flex h-[45px] shrink-0 items-center gap-3 overflow-hidden pl-[13px] pt-0.5">
        {snaps.map(([n, on]) => <Snap key={n} name={n} on={on} />)}
        {["Project", "Disable"].map((n) => (
          <label key={n} className="mr-4 flex items-center gap-2 text-[#333]">
            <input type="checkbox" className="h-[17px] w-[17px] appearance-none border border-[#b5b5b8] bg-[#dedee0]" />
            {n}
          </label>
        ))}
      </div>
      <footer className="flex h-[25px] shrink-0 items-stretch overflow-hidden whitespace-nowrap border-t border-[#c9ccd2] pt-0.5 leading-6">
        <button type="button" className="w-[72px] bg-[#d9ebf8] font-bold">World</button>
        <span className="w-[129px] border-l border-[#c9ccd2] text-center">x -50.77</span>
        <span className="w-[129px] border-l border-[#c9ccd2] text-center">y 114.24</span>
        <span className="w-[129px] border-l border-[#c9ccd2] text-center">z 0.00</span>
        <span className="w-[129px] border-l border-[#c9ccd2] text-center">Millimeters</span>
        <button type="button" className="flex flex-1 items-center gap-1 border-l border-[#c9ccd2] pl-1">
          <span className="h-[19px] w-[20px] bg-black" />Default
        </button>
        <button type="button" className="w-[95px] border-l border-[#c9ccd2]">Grid Snap</button>
        <button type="button" className="w-[67px] border-l border-[#c9ccd2]">Ortho</button>
        <button type="button" className="w-[67px] border-l border-[#c9ccd2]">Planar</button>
      </footer>
    </section>
  );
}

/* ---------- component ribbon ---------- */
function Hex({ children }) {
  return (
    <svg width="35" height="31" viewBox="0 0 35 31" fill="none" stroke="#fff" strokeWidth="2" strokeLinejoin="round" aria-hidden="true">
      <path d="M1 15.500L9 1h17l8 14.500L26 30H9z" fill="url(#hex)" stroke="#111" />
      {children}
    </svg>
  );
}
function Tile({ fill = "url(#tile)", children }) {
  return (
    <svg width="35" height="35" viewBox="0 0 35 35" fill="none" stroke="#222" strokeWidth="2" aria-hidden="true">
      <rect x="1" y="1" width="33" height="33" rx="4" fill={fill} />
      {children}
    </svg>
  );
}
const HexText = ({ t, s }) => (
  <text x="17.500" y={s > 20 ? 24 : 22} textAnchor="middle" fontSize={s} fontWeight="bold" fontFamily="Liberation Serif, serif" fill="#fff" stroke="none">{t}</text>
);

const ribbon = [
  {
    title: "Geometry",
    cols: [
      [["Point", <Hex><path d="M12 10l11 11M23 10L12 21" strokeWidth="4" /></Hex>], ["Vector", <Hex><path d="M10 23l9-9-3-3 9-3-2 9-3-3-9 9z" fill="#fff" strokeWidth="1" /></Hex>]],
      null,
      [["Circle", <Hex><ellipse cx="17.500" cy="15.500" rx="9" ry="7" strokeWidth="3" /></Hex>], ["Circular arc", <Hex><path d="M10 8c7 1 12 8 12 16" strokeWidth="2.500" /><path d="M18 26h9M9 10l5-4" strokeWidth="1.500" /></Hex>]],
      [["Curve", <Hex><ellipse cx="17.500" cy="15.500" rx="12" ry="7" transform="rotate(-40 17.500 15.500)" /><ellipse cx="18" cy="15" rx="7" ry="2.500" transform="rotate(-40 18 15)" strokeWidth="1.500" /></Hex>], ["Line", <Hex><path d="M12 22L23 10" /><circle cx="11" cy="22" r="2.500" fill="#222" /><circle cx="24" cy="9" r="2.500" fill="#222" /></Hex>]],
      [["Plane", <Hex><path d="M7 13l17-7 5 10-18 8z" fill="#999" /><path d="M12 18l4-5 4-1v4l6-2" stroke="#444" /></Hex>], ["Rectangle", <Hex><path d="M17.500 9l7 6.500-7 7-7-7z" strokeWidth="3" /><path d="M10 8l5 4M25 8l-5 4M10 24l5-4M25 24l-5-4" strokeWidth="1" /></Hex>]],
      null,
      [["Box", <Hex><path d="M9 10l9-4 8 3v12l-9 5-8-4z" fill="#ddd" /><path d="M9 10l9 3 8-4M18 13v13" stroke="#666" strokeWidth="1" /></Hex>], ["Brep", <Hex><path d="M8 14l10-8c6 0 8 3 9 8l-9 10c-5 2-10-3-10-10z" fill="#ddd" stroke="#aaa" /><path d="M19 7c6 0 8 4 8 8l-5 3c0-5-2-8-7-8z" fill="#888" stroke="#eee" strokeWidth="1" /></Hex>]],
      [["Mesh", <Hex><path d="M12 8l11 15M23 8L12 23M9 15.500h17M17.500 6v19M12 8h11l3 7.500-3 7.500H12l-3-7.500z" strokeWidth="1.200" /><circle cx="17.500" cy="15.500" r="4" strokeWidth="1.200" /></Hex>], ["Surface", <Hex><path d="M14 8l11-2v18l-16-3c4-3 5-8 5-13z" fill="#999" /><path d="M19 8v14M13 14l12-1" strokeWidth="1" /></Hex>]],
    ],
  },
  {
    title: "Primitive",
    cols: [
      [["Boolean", <Hex><circle cx="17.500" cy="15.500" r="8" fill="#fff" strokeWidth="1" /><path d="M12 20a7 7 0 0 1 10-10z" fill="#222" stroke="none" /></Hex>], ["Integer", <Hex><HexText t="7" s={24} /></Hex>]],
      [["Number", <Hex><HexText t="0.1" s={20} /></Hex>], ["Text", <Hex><HexText t="A" s={26} /></Hex>]],
    ],
  },
  {
    title: "Input",
    cols: [
      [["Graph", <Tile><path d="M17.500 8v8M12 14l5.500 7 5.500-7z" fill="#111" /><path d="M4 25h27M6 25v5M10 25v5M14 25v5M18 25v5M22 25v5M26 25v5M30 25v5" strokeWidth="1.500" /></Tile>], ["Scribble", <Tile fill="#f8c728"><path d="M5 28c2-4 3-7 5-7s0 6 2 6 3-11 5-11 0 8 2 8 2-13 4-13-1 11 2 11 4-4 5-9" stroke="#8c5a10" strokeWidth="3" /></Tile>]],
      null,
      [["Slider", <Tile><rect x="10" y="5" width="14" height="25" fill="#ddd" /><rect x="10" y="18" width="14" height="12" fill="#111" /></Tile>], ["Knob", <svg width="35" height="35" fill="none" stroke="#555" strokeWidth="2" aria-hidden="true"><circle cx="17.500" cy="17.500" r="16" fill="#aaa" /><path d="M27 11l6 6.500-6 6.500a11 11 0 1 1 0-13z" fill="#444" stroke="#111" /></svg>]],
      [["Sketch", <Tile><path d="M8 8c6-2 12 0 17-3" stroke="#666" /><path d="M18 7l2 7-4 1M22 17l-8 6 5 0c-6 3-4 6 0 8M18 22h8" stroke="#222" strokeWidth="2.500" /></Tile>], ["List", <Tile><path d="M4 6h26v6H4zM4 15h26v5H4zM4 24h26v5H4z" fill="#fff" /></Tile>]],
      null,
      [["Gradient", <Tile fill="url(#pinktile)"><path d="M1 22h33" strokeWidth="1.500" /><circle cx="4" cy="22" r="2.500" fill="#fff" /><circle cx="24" cy="22" r="3" fill="#fff" /></Tile>], ["Swatch", <Tile fill="#57c21c"><g stroke="none"><path d="M10 2h8v9h-8zM2 20h8v8H2z" fill="#b7ef35" /><path d="M18 3h8v8h-8zM26 11h8v8h-8z" fill="#8ae02a" /><path d="M2 11h8v9H2zM10 19h8v13h-8zM26 3h7v8h-7z" fill="#0f7a1c" /><path d="M26 20h7v12h-7zM18 27h8v6h-8z" fill="#39e2a8" /><path d="M18 11h8v9h-8z" fill="#e6f04a" /></g></Tile>]],
    ],
  },
  {
    title: "Util",
    cols: [
      [["Cherry picker", <svg width="35" height="35" fill="none" aria-hidden="true"><path d="M10 20C13 11 17 8 21 6c3 5 4 10 4 17" stroke="#333" strokeWidth="2" /><path d="M20 4C12 0 8 5 6 10c6 2 12 0 14-6z" fill="#58a824" stroke="#2c5e12" /><circle cx="9" cy="23" r="6.500" fill="#d91414" /><circle cx="25" cy="27" r="6.500" fill="#d91414" /><circle cx="7" cy="21" r="2" fill="#fbb" /><circle cx="23" cy="25" r="2" fill="#fbb" /></svg>], ["Tree", <Tile><path d="M18 32c1-5 1-9 0-12l-6-5-6-1M12 15l-2-7M18 20l0-13M18 20l6-6 6-1M24 14l2-8M14 17l0-10M21 17l1-11M8 14l-3 3M27 13l3 4" strokeWidth="2" /><g fill="#333" stroke="none"><circle cx="9" cy="9" r="3" /><circle cx="15" cy="7" r="3" /><circle cx="21" cy="7" r="3" /><circle cx="27" cy="9" r="3" /><circle cx="6" cy="14" r="2" /><circle cx="29" cy="14" r="2" /></g><path d="M2 32h31" strokeWidth="4" /></Tile>]],
      null,
      [["Output", <svg width="35" height="31" aria-hidden="true"><path d="M4 9h11V4l16 11-16 12v-6H4z" fill="#444" stroke="#111" strokeWidth="2" /></svg>], ["Input relay", <svg width="35" height="31" aria-hidden="true"><path d="M4 9h11V4l16 11-16 12v-6H4z" fill="#eee" stroke="#555" strokeWidth="2" /></svg>]],
      null,
      [["Cluster", <svg width="35" height="35" aria-hidden="true"><path d="M4 14c2-8 10-12 15-11s7 6 5 11-12 11-17 9-4-6-3-9z" fill="#c4c4c4" stroke="#666" strokeWidth="2" /><circle cx="13" cy="13" r="3.500" fill="#444" /><path d="M16 24c-1-7 7-13 12-12s5 9 2 14-13 6-14-2z" fill="#d8508f" stroke="#82234f" strokeWidth="2" /><path d="M20 24l7-8" stroke="#fbd" strokeWidth="3" /></svg>], ["Galapagos", <svg width="35" height="35" aria-hidden="true"><path d="M14 3h6v11l8 15c0 3-22 3-22 0l8-15z" fill="#fbeff4" stroke="#555" strokeWidth="1.500" /><path d="M11 20h12l4 9c0 2-20 2-20 0z" fill="#d8437f" /></svg>]],
    ],
  },
];

function RibbonGroup({ title, cols }) {
  return (
    <div className="flex h-[107px] flex-col overflow-hidden rounded-lg border border-[#8f8f8f] bg-gradient-to-b from-[#d6d6d6] to-[#ececec]">
      <div className="flex flex-1 px-0.5 pt-px">
        {cols.map((c, i) =>
          c ? (
            <div key={i} className="flex flex-col">
              {c.map(([label, art]) => (
                <button type="button" key={label} aria-label={label} className="grid h-[41px] w-[41px] place-items-center">{art}</button>
              ))}
            </div>
          ) : (
            <span key={i} className="mx-[7px] my-3 w-px bg-[#aaa]" />
          )
        )}
      </div>
      <div className="relative h-5 bg-[#1c1c1c] pr-4 text-center text-[14px] leading-[19px] text-white">
        {title}
        <svg className="absolute right-1 top-1" width="10" height="12" fill="none" stroke="#bbb" strokeWidth="2" aria-hidden="true"><path d="M5 0v11M0 5h10M3 8l2 3 2-3" /></svg>
      </div>
    </div>
  );
}

/* ---------- definition canvas ---------- */
const InPort = () => <span className="absolute right-full top-1/2 h-3 w-[7px] -translate-y-1/2 rounded-l-full border-2 border-r-0 border-black bg-white" />;
const OutPort = () => <span className="absolute left-full top-1/2 h-3 w-[7px] -translate-y-1/2 rounded-r-full border-2 border-l-0 border-black bg-white" />;

function Node({ place, title, inputs, output, green }) {
  return (
    <div className={`absolute flex rounded-[5px] border-2 text-[13px] leading-4 text-[#222] ${place} ${green ? "border-[#31591a] bg-gradient-to-b from-[#a4f65c] to-[#77e02c]" : "border-[#565656] bg-gradient-to-b from-[#f2f2f2] to-[#c8c8c8]"}`}>
      <div className={`flex flex-col pb-0.5 pt-px ${inputs.length > 3 ? "w-6" : "w-[21px]"}`}>
        {inputs.map((n) => (
          <span key={n} className="relative flex flex-1 items-center justify-center">
            <InPort />{n}
          </span>
        ))}
      </div>
      <div className={`flex w-[31px] items-center justify-center rounded border-2 border-[#222] ${green ? "bg-gradient-to-b from-[#53775a] via-[#1c4726] to-[#1c4a22]" : "bg-gradient-to-b from-[#8a8a8a] via-[#484848] to-[#303030]"}`}>
        <span className="rotate-180 text-base font-bold leading-none text-white [writing-mode:vertical-rl]">{title}</span>
      </div>
      <span className="flex flex-1 items-center justify-center">{output}</span>
      <OutPort />
    </div>
  );
}

function Slider({ place, labelWidth, name, id, value, text, side }) {
  return (
    <div className={`absolute flex h-[26px] w-[244px] rounded border-2 border-[#4a4a4a] bg-gradient-to-b from-[#f4f4f4] to-[#c9c9c9] text-[13px] leading-[22px] text-[#222] ${place}`}>
      <label htmlFor={id} className={`${labelWidth} border-r-2 border-[#444] bg-gradient-to-b from-[#a9a9bb] to-[#85859a] text-center`}>{name}</label>
      <div className="relative flex-1">
        <svg className={`absolute top-1.5 ${side === "right" ? "left-2" : "right-3"}`} width={side === "right" ? 66 : 84} height="8" stroke="#aaa" aria-hidden="true">
          <path d="M0 6.500H90M1 0v6M17 2v4M33 0v6M49 2v4M65 0v6M81 2v4" />
        </svg>
        <span className={`absolute top-0 ${side === "right" ? "right-[34px]" : "left-[21px]"}`}>{text}</span>
        <input
          id={id}
          type="range"
          defaultValue={value}
          className="absolute inset-0 h-full w-full appearance-none bg-transparent [&::-webkit-slider-thumb]:h-[11px] [&::-webkit-slider-thumb]:w-[11px] [&::-webkit-slider-thumb]:appearance-none [&::-webkit-slider-thumb]:rounded-full [&::-webkit-slider-thumb]:border-[3px] [&::-webkit-slider-thumb]:border-black [&::-webkit-slider-thumb]:bg-white"
        />
      </div>
      <OutPort />
    </div>
  );
}

function Canvas() {
  return (
    <div className="relative min-h-0 flex-1 overflow-hidden border-l border-[#777] bg-[#d4d0c8]">
      <svg className="absolute inset-0 h-full w-full" fill="none" aria-hidden="true">
        <defs>
          <pattern id="ghgrid" x="117" y="82" width="187" height="62.200" patternUnits="userSpaceOnUse">
            <path d="M1 0V63M0 1H187" stroke="#bdb9b1" strokeWidth="1.500" />
          </pattern>
        </defs>
        <rect width="100%" height="100%" fill="url(#ghgrid)" />
        <path d="M410 309C460 305 458 245 505 241" stroke="#57524b" strokeWidth="7" />
        <path d="M410 309C460 305 458 245 505 241" stroke="#a9a49b" strokeWidth="3" />
        <g stroke="#4c463f" strokeWidth="3">
          <path d="M449 449H489" />
          <path d="M460 493C474 492 474 475 490 474" />
          <path d="M445 568H484" />
          <path d="M454 613C468 612 468 594 484 593" />
        </g>
        <path d="M586 474C622 478 618 536 653 538" stroke="#8cc255" strokeWidth="3" />
        <path d="M581 594C616 592 618 566 653 564" stroke="#8fb96a" strokeWidth="3" />
      </svg>
      <h2 className="absolute left-[212px] top-[57px] w-[315px] bg-black pb-px pl-3 pt-0.5 text-[44px] leading-[57px] text-white">BOX 2PT tool</h2>

      <div className="absolute left-[340px] top-[296px] flex h-[26px] w-[66px] items-center justify-center rounded border-2 border-[#565656] bg-gradient-to-b from-[#f4f4f4] to-[#c9c9c9] text-[13px] text-[#222]">
        <InPort />Pt<OutPort />
      </div>
      <Node place="left-[509px] top-[225px] h-[106px] w-[85px]" title="Voronoi" inputs={["P", "R", "B", "Pl"]} output="C" />

      <div className="absolute left-[153px] top-[381px] h-[316px] w-[640px] border-[12px] border-[#ee1c24]" />
      <Slider place="left-[201px] top-[436px]" labelWidth="w-[94px]" id="x1" name="X coordinate" value={86} text="-180" side="right" />
      <Slider place="left-[210px] top-[480px]" labelWidth="w-[93px]" id="y1" name="Y coordinate" value={4} text="0.000" side="left" />
      <Slider place="left-[196px] top-[555px]" labelWidth="w-[93px]" id="x2" name="X coordinate" value={4} text="0" side="left" />
      <Slider place="left-[205px] top-[600px]" labelWidth="w-[93px]" id="y2" name="Y coordinate" value={87} text="180.000" side="right" />
      <Node place="left-[495px] top-[433px] h-[81px] w-[85px]" title="Pt" inputs={["X", "Y", "Z"]} output="Pt" />
      <Node place="left-[489px] top-[553px] h-[81px] w-[86px]" title="Pt" inputs={["X", "Y", "Z"]} output="Pt" />
      <Node place="left-[658px] top-[523px] h-[81px] w-[82px]" title="Box" inputs={["A", "B", "P"]} output="B" green />
      <div className="absolute bottom-0 left-0 h-[41px] w-2.5 border-2 border-l-0 border-[#222] bg-gradient-to-b from-[#e5e5e5] via-[#888] to-[#888]" />
    </div>
  );
}

function GraphWindow() {
  return (
    <section className="z-10 flex min-w-0 flex-1 flex-col border-l-2 border-[#8a8a8a] bg-[#f0f0f0] shadow-[-3px_0_14px_rgba(0,0,0,0.3)]">
      <header className="h-[22px] shrink-0 overflow-hidden bg-white pl-[9px]">
        <h2 className="-mt-[11px] text-[17px] leading-[22px] text-[#8d8d8d]">Grasshopper - unnamed</h2>
      </header>
      <nav className="flex h-[38px] shrink-0 items-center gap-[27px] bg-[#f3f3f3] pl-[17px] pt-0.5 text-[17px]">
        {["File", "Edit", "View", "Display", "Solution", "Help"].map((m) => <button type="button" key={m}>{m}</button>)}
      </nav>
      <div className="flex h-[35px] shrink-0 items-end overflow-hidden text-[15px] text-[#6e6e6e]">
        <button type="button" className="h-[33px] rounded-t-lg border border-b-0 border-[#a5a5a5] bg-white pb-1.5 pl-2 pr-3.5 text-[#222]">Params</button>
        <div className="flex h-[33px] flex-1 items-center gap-px border-b border-[#a5a5a5]">
          {["Maths", "Sets", "Vector", "Curve", "Surface", "Mesh", "Intersect", "Transform", "Display", "Kangaroo2"].map((t) => (
            <button type="button" key={t} className="px-[13px]">{t}</button>
          ))}
        </div>
      </div>
      <div className="flex h-[129px] shrink-0 gap-[5px] overflow-hidden border-b-2 border-[#7a7a7a] bg-gradient-to-b from-[#d4d4d4] to-[#f2f2f2] pl-0.5 pt-[3px]">
        {ribbon.map((g) => <RibbonGroup key={g.title} {...g} />)}
      </div>
      <div className="flex h-[45px] shrink-0 items-center bg-gradient-to-b from-white to-[#f1f1f1] pl-[6px]">
        <button type="button" aria-label="Open file">
          <svg width="30" height="32" aria-hidden="true"><path d="M4 2h10l3 3h8v12H4z" fill="#eee" stroke="#777" strokeWidth="1.500" /><path d="M1 31V16h8l5-6h14v21z" fill="#62bb38" stroke="#2f7d16" strokeWidth="1.500" /></svg>
        </button>
        <button type="button" aria-label="Save file" className="ml-3">
          <svg width="33" height="32" aria-hidden="true"><path d="M1 1h31v30H4l-3-3z" fill="#1b63d6" stroke="#123a80" strokeWidth="2" /><rect x="7" y="2" width="19" height="13" fill="#e6e6dc" /><path d="M9 6h15M9 10h15" stroke="#bbb" /><rect x="8" y="20" width="16" height="11" fill="#dde6f5" stroke="#123a80" /><rect x="10" y="22" width="5" height="8" fill="#1b4fae" /></svg>
        </button>
        <span className="mx-[9px] h-8 w-px bg-[#ccc]" />
        <div className="relative w-[199px]">
          <select aria-label="Zoom" defaultValue="85%" className="h-[33px] w-full appearance-none border-2 border-[#7a7a7a] bg-white pl-0.5 text-base">
            <option>85%</option>
            <option>100%</option>
          </select>
          <svg className="pointer-events-none absolute right-1.5 top-3" width="12" height="8" fill="none" stroke="#444" strokeWidth="1.500" aria-hidden="true"><path d="M0 1l6 6 6-6" /></svg>
        </div>
        <button type="button" aria-label="Zoom extents" className="ml-2 flex items-center gap-2">
          <svg width="34" height="33" viewBox="0 0 34 33" fill="none" stroke="#111" aria-hidden="true"><path d="M3 12V3h9M22 3h9v9M31 21v9h-9M12 30H3v-9" strokeWidth="5" /><path d="M13 13l7 7M20 13l-7 7" strokeWidth="3" /></svg>
          <svg width="8" height="5" aria-hidden="true"><path d="M0 0h8L4 5z" fill="#111" /></svg>
        </button>
        <button type="button" aria-label="Preview" className="ml-3 flex items-center gap-2.5">
          <svg width="33" height="24" aria-hidden="true"><path d="M1 12C9 1 24 1 32 12 24 23 9 23 1 12z" fill="#fff" stroke="#223" strokeWidth="2.500" /><circle cx="16.500" cy="11.500" r="8" fill="#3a9fd4" stroke="#134e78" strokeWidth="2" /><circle cx="16.500" cy="11.500" r="3.500" fill="#0b1c30" /><circle cx="14" cy="9" r="2" fill="#dff" /></svg>
          <svg width="8" height="5" aria-hidden="true"><path d="M0 0h8L4 5z" fill="#111" /></svg>
        </button>
        <button type="button" aria-label="Sketch" className="ml-2">
          <svg width="33" height="32" fill="none" aria-hidden="true"><path d="M1 17c7-4 4 2 3 6-1 5 5 8 12 3" stroke="#222" strokeWidth="2.500" /><path d="M12 27l2-10L26 4l5-2 1 8-10 13z" fill="#e03a2e" stroke="#a5281d" /><path d="M12 27l2-10 8 6z" fill="#f0c23c" stroke="#333" /><path d="M17 16L28 5" stroke="#f7a79d" strokeWidth="2.500" /></svg>
        </button>
      </div>
      <Canvas />
      <footer className="flex h-[37px] shrink-0 items-center border-t-2 border-white pl-2 font-bold leading-none">
        <span>...</span>
      </footer>
    </section>
  );
}

export default function App() {
  return (
    <main className="flex h-screen flex-col overflow-hidden font-['Open_Sans',sans-serif] text-base text-[#1c1c22]">
      <svg width="0" height="0" className="absolute" aria-hidden="true">
        <defs>
          <linearGradient id="metal"><stop offset="0" stopColor="#ccc" /><stop offset="1" stopColor="#888" /></linearGradient>
          <linearGradient id="bluebar"><stop offset="0" stopColor="#7ea4ee" /><stop offset=".6" stopColor="#1d3fae" /><stop offset="1" stopColor="#dce6ff" /></linearGradient>
          <linearGradient id="hex" x2="0" y2="1"><stop offset="0" stopColor="#4a4a4a" /><stop offset=".5" stopColor="#1a1a1a" /><stop offset="1" stopColor="#2c2c2c" /></linearGradient>
          <linearGradient id="tile" x2="0" y2="1"><stop offset="0" stopColor="#777" /><stop offset=".5" stopColor="#ccc" /><stop offset="1" stopColor="#8a8a8a" /></linearGradient>
          <linearGradient id="pinktile" x2="0" y2="1"><stop offset="0" stopColor="#f7c0df" /><stop offset=".5" stopColor="#e0128a" /><stop offset="1" stopColor="#f58ac6" /></linearGradient>
        </defs>
      </svg>
      <div className="flex min-h-0 flex-1">
        <ModelWindow />
        <GraphWindow />
      </div>
      <div className="h-1 shrink-0 bg-[#2c2e33]" />
    </main>
  );
}
